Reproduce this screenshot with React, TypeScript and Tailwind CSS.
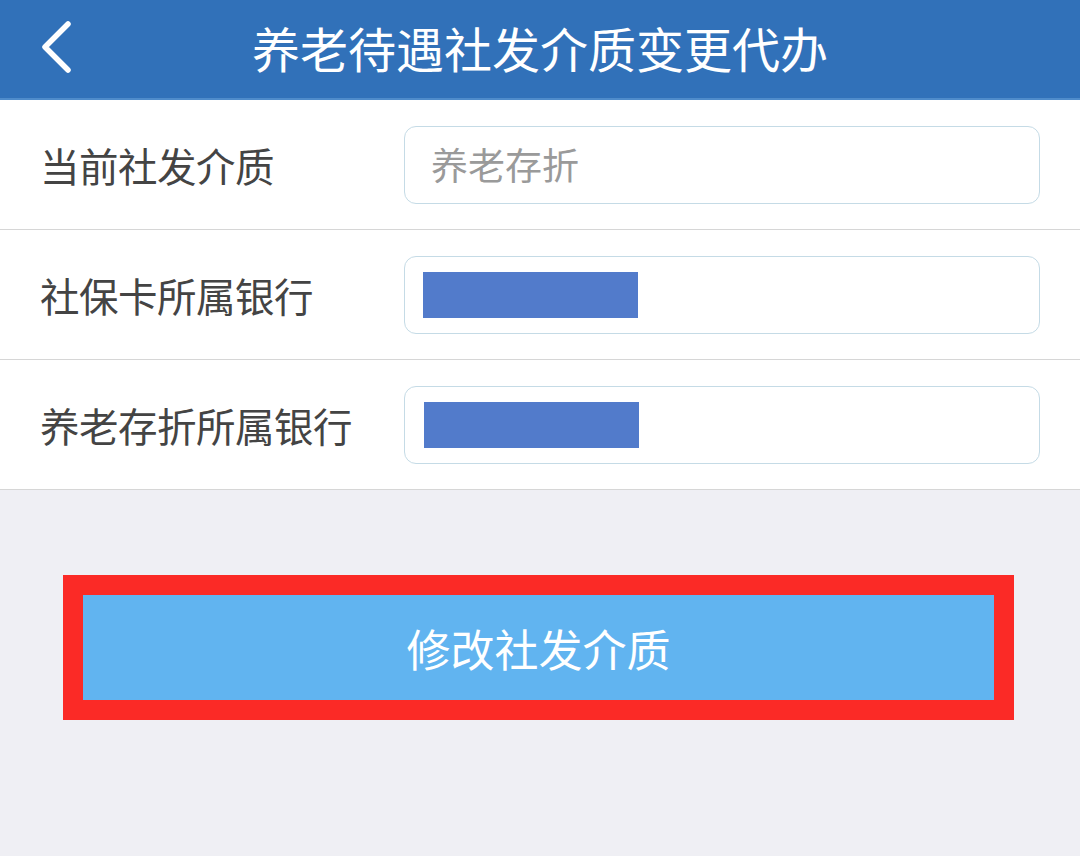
import React from "react";

const font = { fontFamily: '"Noto Sans CJK SC", "Noto Sans", sans-serif' };

function Row({ label, children }: { label: string; children: React.ReactNode }) {
  return (
    <div className="flex h-[130px] items-center border-b border-[#d6d6d6] bg-white">
      <div className="w-[404px] shrink-0 pl-[40px] text-[39.5px] tracking-[-0.5px] text-[#444444]">{label}</div>
      <div className="mr-[40px] flex h-[78px] flex-1 items-center rounded-[12px] border-[1.5px] border-[#c5dbe6] bg-white pl-[18px]">
        {children}
      </div>
    </div>
  );
}

export default function App() {
  return (
    <div className="flex h-[856px] w-[1080px] flex-col bg-[#efeff4]" style={font}>
      <div className="relative flex h-[100px] items-center justify-center border-b-2 border-[#4f8ccb] bg-[#3171b9]">
        <svg className="absolute left-[38px] top-[20px]" width="36" height="54" viewBox="0 0 36 54">
          <path d="M30 4 L7 27 L30 50" fill="none" stroke="white" strokeWidth="5.5" strokeLinecap="round" strokeLinejoin="round" />
        </svg>
        <div className="pb-[4px] text-[48px] leading-none text-white">养老待遇社发介质变更代办</div>
      </div>
      <Row label="当前社发介质">
        <span className="pl-[8px] text-[37px] text-[#9a9a9a]">养老存折</span>
      </Row>
      <Row label="社保卡所属银行">
        <div className="h-[46px] w-[215px] bg-[#527bcb]" />
      </Row>
      <Row label="养老存折所属银行">
        <div className="ml-[1px] h-[46px] w-[215px] bg-[#527bcb]" />
      </Row>
      <div className="mt-[85px] ml-[63px] w-[951px] border-[20px] border-[#fb2a26]">
        <div className="flex h-[105px] items-center justify-center bg-[#61b4f0] text-[44px] text-white">
          修改社发介质
        </div>
      </div>
    </div>
  );
}
